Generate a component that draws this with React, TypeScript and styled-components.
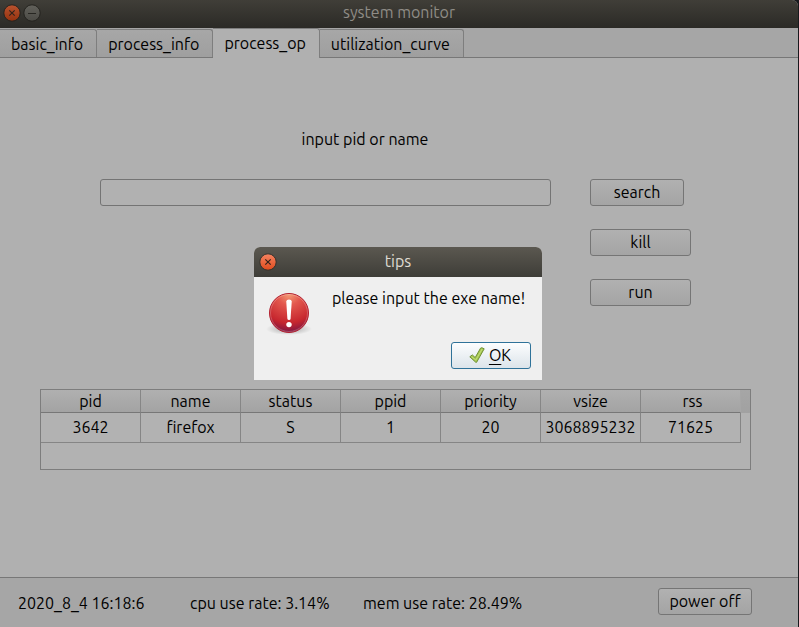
import React from "react";
import styled, { createGlobalStyle, css } from "styled-components";

const GlobalStyle = createGlobalStyle`
  *, *::before, *::after { box-sizing: border-box; }
  body { margin: 0; background: #17191d; }
  body, button, input, table {
    font-family: Ubuntu, "Noto Sans", sans-serif;
    font-size: 16px;
    line-height: 20px;
    color: #000;
  }
`;

const Desktop = styled.div`
  min-height: 100vh;
  padding-right: 1px;
  display: flex;
  background: #17191d;
`;

const Window = styled.div`
  flex: 1;
  display: flex;
  flex-direction: column;
  background: #a6a6a6;
  border-radius: 0 6px 0 0;
  overflow: hidden;
`;

const TitleBar = styled.header<{ $active?: boolean }>`
  display: grid;
  grid-template-columns: 60px 1fr 60px;
  align-items: center;
  flex: none;
  height: ${(p) => (p.$active ? 30 : 28)}px;
  padding: ${(p) => (p.$active ? "0 5px" : "0 3px 2px")};
  background: ${(p) =>
    p.$active
      ? "linear-gradient(#5b5850, #3e3d38)"
      : "linear-gradient(#403e38, #2b2a26)"};
  color: ${(p) => (p.$active ? "#dfdbd2" : "#8f8c86")};
`;

const TitleText = styled.h1`
  margin: 0;
  padding-bottom: 2px;
  font-size: 16px;
  font-weight: 400;
  line-height: 20px;
  text-align: center;
`;

const WindowButtons = styled.div`
  display: flex;
  gap: 2px;
`;

const RoundButton = styled.button`
  display: flex;
  width: 18px;
  height: 18px;
  padding: 0;
  border: 0;
  background: none;
`;

const TabBar = styled.div`
  display: flex;
  align-items: flex-end;
  flex: none;
  height: 30px;
  border-bottom: 1px solid #777;
`;

const Tab = styled.button<{ $selected?: boolean }>`
  height: 28px;
  padding: 0 13px 0 11px;
  white-space: nowrap;
  border: 1px solid #7e7e7e;
  border-left-width: 0;
  border-bottom: 0;
  border-radius: 0 3px 0 0;
  background: linear-gradient(#a7a7a7, #9f9f9f);
  ${(p) =>
    p.$selected &&
    css`
      height: 30px;
      margin-bottom: -1px;
      padding-bottom: 2px;
      background: #b0b0b0;
    `}
`;

const Page = styled.main`
  flex: 1;
  display: flex;
  flex-direction: column;
  padding: 71px 47px 0 40px;
  background: #b0b0b0;
`;

const SearchForm = styled.form`
  display: grid;
  grid-template-columns: 1fr 101px;
  column-gap: 39px;
  row-gap: 30px;
  padding: 0 60px;
`;

const PidLabel = styled.label`
  grid-column: 1;
  padding-left: 79px;
  text-align: center;
`;

const PidInput = styled.input`
  grid-column: 1;
  width: 100%;
  height: 27px;
  padding: 0 6px;
  border: 1px solid #747474;
  border-radius: 3px;
  background: #b1b1b1;
`;

const Actions = styled.div`
  display: flex;
  flex-direction: column;
  gap: 23px;
`;

const PushButton = styled.button<{ $compact?: boolean }>`
  width: ${(p) => (p.$compact ? "94px" : "101px")};
  height: 27px;
  padding: 0 0 1px;
  border: 1px solid #757575;
  border-radius: 3px;
  background: linear-gradient(#b1b1b1, #a4a4a4);
`;

const TableFrame = styled.div`
  height: 81px;
  margin-top: 83px;
  padding-right: 9px;
  border: 1px solid #7d7d7d;
  background: linear-gradient(#a6a6a6, #a1a1a1) top / 100% 23px no-repeat #b2b2b2;
`;

const ProcessTable = styled.table`
  width: 100%;
  table-layout: fixed;
  border-collapse: separate;
  border-spacing: 0;
`;

const HeadCell = styled.th`
  height: 23px;
  padding: 0;
  font-weight: 400;
  text-align: center;
  border-right: 1px solid #868686;
  border-bottom: 1px solid #777;
  background: linear-gradient(#b0b0b0, #a3a3a3);
  &:last-child {
    padding-left: 4px;
    border-right-color: #a6a6a6;
  }
`;

const Cell = styled.td`
  height: 30px;
  padding: 0 0 2px;
  text-align: center;
  border-right: 1px solid #858585;
  border-bottom: 1px solid #858585;
`;

const StatusBar = styled.footer`
  display: grid;
  grid-template-columns: 172px 173px 1fr auto;
  align-items: start;
  flex: none;
  height: 50px;
  padding: 10px 46px 0 18px;
  border-top: 1px solid #777;
`;

const StatusText = styled.span`
  line-height: 30px;
`;

const Overlay = styled.div`
  position: fixed;
  inset: 0 3px 0 0;
  display: flex;
  align-items: center;
  justify-content: center;
`;

const Dialog = styled.section`
  width: 288px;
  border-radius: 6px 6px 0 0;
  overflow: hidden;
  background: #efefef;
`;

const DialogBody = styled.div`
  display: grid;
  grid-template-columns: 48px 1fr;
  column-gap: 19px;
  padding: 11px;
`;

const Message = styled.p`
  margin: 0;
  white-space: nowrap;
`;

const DialogIcon = styled.div`
  height: 54px;
`;

const OkButton = styled.button`
  grid-column: 2;
  justify-self: end;
  display: flex;
  align-items: center;
  justify-content: center;
  gap: 4px;
  width: 80px;
  height: 27px;
  padding: 0 2px 1px 0;
  border: 1px solid #2f7299;
  border-radius: 3px;
  background: linear-gradient(#fcfdfe, #dce4ea);
`;

const Mnemonic = styled.span`
  text-decoration: underline;
  text-underline-offset: 3px;
`;

function CloseIcon({ active }: { active?: boolean }) {
  const id = active ? "close-active" : "close-dim";
  return (
    <svg width="18" height="18" viewBox="0 0 18 18" aria-hidden="true">
      <defs>
        <linearGradient id={id} x2="0" y2="1">
          <stop offset="0" stopColor={active ? "#f58462" : "#b9532f"} />
          <stop offset="1" stopColor={active ? "#df4a1c" : "#94320f"} />
        </linearGradient>
      </defs>
      <circle cx="9" cy="9" r="8.2" fill={`url(#${id})`} stroke={active ? "#33322d" : "#24231f"} />
      <path d="M6.3 6.3l5.4 5.4M11.7 6.3l-5.4 5.4" stroke="#33231b" strokeWidth="1.2" />
    </svg>
  );
}

function MinimizeIcon() {
  return (
    <svg width="18" height="18" viewBox="0 0 18 18" aria-hidden="true">
      <defs>
        <linearGradient id="min-fill" x2="0" y2="1">
          <stop offset="0" stopColor="#62615b" />
          <stop offset="1" stopColor="#4b4a45" />
        </linearGradient>
      </defs>
      <circle cx="9" cy="9" r="8.2" fill="url(#min-fill)" stroke="#24231f" />
      <path d="M5 9.5h8" stroke="#272622" />
    </svg>
  );
}

function AlertIcon() {
  return (
    <svg width="48" height="48" viewBox="0 0 48 48" aria-hidden="true">
      <defs>
        <radialGradient id="alert-fill" cx="0.5" cy="0" r="1">
          <stop offset="0" stopColor="#f4a078" />
          <stop offset="0.3" stopColor="#e3584e" />
          <stop offset="0.75" stopColor="#c6262e" />
          <stop offset="1" stopColor="#7f1642" />
        </radialGradient>
        <radialGradient id="alert-shadow">
          <stop offset="0.5" stopColor="#000" stopOpacity="0.16" />
          <stop offset="1" stopColor="#000" stopOpacity="0" />
        </radialGradient>
      </defs>
      <ellipse cx="24" cy="41" rx="23" ry="6" fill="url(#alert-shadow)" />
      <circle cx="24" cy="25" r="19.5" fill="url(#alert-fill)" stroke="#b3202f" />
      <circle cx="24" cy="25" r="18.5" fill="none" stroke="#fff" strokeOpacity="0.22" />
      <path d="M21.3 13.6Q21.3 11.6 24 11.6T26.7 13.6L25.6 30.8Q25.4 32 24 32T22.4 30.8Z" fill="#fff" />
      <circle cx="24" cy="36.6" r="2.7" fill="#fff" />
    </svg>
  );
}

function CheckIcon() {
  return (
    <svg width="16" height="16" viewBox="0 0 16 16" aria-hidden="true">
      <path
        d="M.8 9.8L3.3 7.9 6.2 10.6 11.5 1.2 12.8.7 15.2 1.8 7.6 15.3 6.8 15.3Z"
        fill="#a5c84e"
        stroke="#6f8f35"
        strokeLinejoin="round"
      />
      <path d="M2.5 9.7L6.8 13 13.2 2" fill="none" stroke="#c3dc7c" />
    </svg>
  );
}

const tabs = ["basic_info", "process_info", "process_op", "utilization_curve"];

const columns = ["pid", "name", "status", "ppid", "priority", "vsize", "rss"];
const rows = [["3642", "firefox", "S", "1", "20", "3068895232", "71625"]];

export default function App() {
  return (
    <Desktop>
      <GlobalStyle />
      <Window>
        <TitleBar>
          <WindowButtons>
            <RoundButton aria-label="Close"><CloseIcon /></RoundButton>
            <RoundButton aria-label="Minimize"><MinimizeIcon /></RoundButton>
          </WindowButtons>
          <TitleText>system monitor</TitleText>
        </TitleBar>
        <TabBar role="tablist">
          {tabs.map((name) => (
            <Tab
              key={name}
              role="tab"
              aria-selected={name === "process_op"}
              $selected={name === "process_op"}
            >
              {name}
            </Tab>
          ))}
        </TabBar>
        <Page>
          <SearchForm onSubmit={(e) => e.preventDefault()}>
            <PidLabel htmlFor="pid">input pid or name</PidLabel>
            <PidInput id="pid" type="text" />
            <Actions>
              <PushButton type="submit" $compact>search</PushButton>
              <PushButton type="button">kill</PushButton>
              <PushButton type="button">run</PushButton>
            </Actions>
          </SearchForm>
          <TableFrame>
            <ProcessTable>
              <thead>
                <tr>
                  {columns.map((c) => <HeadCell key={c} scope="col">{c}</HeadCell>)}
                </tr>
              </thead>
              <tbody>
                {rows.map((row) => (
                  <tr key={row[0]}>
                    {row.map((value, i) => <Cell key={columns[i]}>{value}</Cell>)}
                  </tr>
                ))}
              </tbody>
            </ProcessTable>
          </TableFrame>
        </Page>
        <StatusBar>
          <StatusText>2020_8_4 16:18:6</StatusText>
          <StatusText>cpu use rate: 3.14%</StatusText>
          <StatusText>mem use rate: 28.49%</StatusText>
          <PushButton type="button" $compact>power off</PushButton>
        </StatusBar>
      </Window>
      <Overlay>
        <Dialog role="alertdialog" aria-labelledby="tips-title" aria-describedby="tips-text">
          <TitleBar $active>
            <WindowButtons>
              <RoundButton aria-label="Close dialog"><CloseIcon active /></RoundButton>
            </WindowButtons>
            <TitleText as="h2" id="tips-title">tips</TitleText>
          </TitleBar>
          <DialogBody>
            <DialogIcon><AlertIcon /></DialogIcon>
            <Message id="tips-text">please input the exe name!</Message>
            <OkButton>
              <CheckIcon />
              <span><Mnemonic>O</Mnemonic>K</span>
            </OkButton>
          </DialogBody>
        </Dialog>
      </Overlay>
    </Desktop>
  );
}
